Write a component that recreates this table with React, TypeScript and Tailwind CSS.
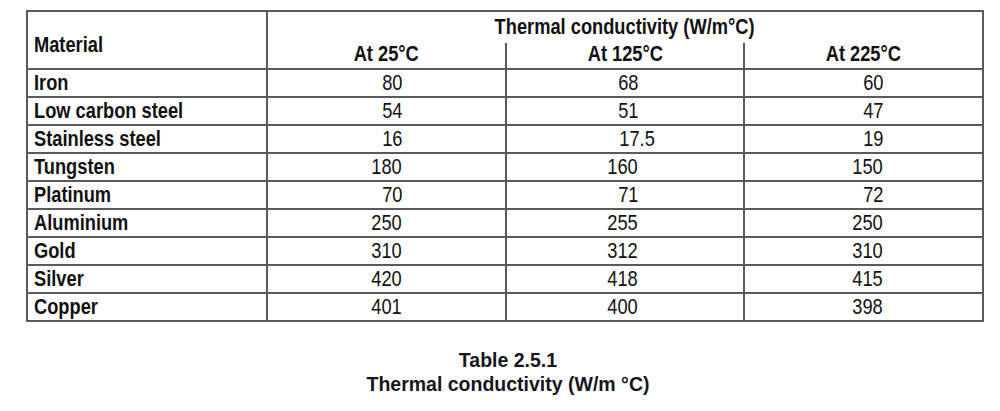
import React from 'react';

type Row = { name: string; a: string; b: string; c: string };

const rows: Row[] = [
  { name: 'Iron', a: '80', b: '68', c: '60' },
  { name: 'Low carbon steel', a: '54', b: '51', c: '47' },
  { name: 'Stainless steel', a: '16', b: '17.5', c: '19' },
  { name: 'Tungsten', a: '180', b: '160', c: '150' },
  { name: 'Platinum', a: '70', b: '71', c: '72' },
  { name: 'Aluminium', a: '250', b: '255', c: '250' },
  { name: 'Gold', a: '310', b: '312', c: '310' },
  { name: 'Silver', a: '420', b: '418', c: '415' },
  { name: 'Copper', a: '401', b: '400', c: '398' },
];

const cell = 'border-2 border-[#5a5a5a] p-0 leading-none whitespace-nowrap';

// condensed look: Arial-width face squeezed to "narrow" proportions
const Narrow = ({ children, origin }: { children: React.ReactNode; origin: string }) => (
  <span className={`inline-block scale-x-[0.83] ${origin}`}>{children}</span>
);

const App: React.FC = () => {
  return (
    <div className="w-[1000px] h-[411px] bg-white overflow-hidden">
      <div className="pl-[26px] pt-[10px]">
        <table
          className="w-[956px] table-fixed border-collapse text-[#111] text-[22px] font-bold"
          style={{ fontFamily: '"Liberation Sans", Arial, sans-serif' }}
        >
          <colgroup>
            <col className="w-[240px]" />
            <col className="w-[239px]" />
            <col className="w-[238px]" />
            <col className="w-[239px]" />
          </colgroup>
          <thead>
            <tr className="h-[32px]">
              <th rowSpan={2} className={`${cell} text-left pl-[6px] pt-[10px]`}>
                <Narrow origin="origin-left">Material</Narrow>
              </th>
              <th colSpan={3} className={`${cell} border-b-0 text-center align-middle pb-[1px]`}>
                <Narrow origin="origin-center">Thermal conductivity (W/m°C)</Narrow>
              </th>
            </tr>
            <tr className="h-[26px]">
              <th className={`${cell} border-t-0 text-center pb-[3px]`}>
                <Narrow origin="origin-center">At 25°C</Narrow>
              </th>
              <th className={`${cell} border-t-0 text-center pb-[3px]`}>
                <Narrow origin="origin-center">At 125°C</Narrow>
              </th>
              <th className={`${cell} border-t-0 text-center pb-[3px]`}>
                <Narrow origin="origin-center">At 225°C</Narrow>
              </th>
            </tr>
          </thead>
          <tbody className="font-normal">
            {rows.map((r) => (
              <tr key={r.name} className="h-[28px]">
                <td className={`${cell} font-bold pl-[6px] pb-[1px]`}>
                  <Narrow origin="origin-left">{r.name}</Narrow>
                </td>
                <td className={`${cell} text-right pr-[103px] pb-[1px]`}>
                  <Narrow origin="origin-right">{r.a}</Narrow>
                </td>
                <td className={`${cell} text-right pb-[1px] ${r.b === '17.5' ? 'pr-[88px]' : 'pr-[105px]'}`}>
                  <Narrow origin="origin-right">{r.b}</Narrow>
                </td>
                <td className={`${cell} text-right pr-[99px] pb-[1px]`}>
                  <Narrow origin="origin-right">{r.c}</Narrow>
                </td>
              </tr>
            ))}
          </tbody>
        </table>
        <div
          className="w-[956px] mt-[26px] pl-[8px] text-center text-[19.5px] leading-[24px] font-bold text-[#151520]"
          style={{ fontFamily: '"Liberation Sans", Arial, sans-serif' }}
        >
          <div>Table 2.5.1</div>
          <div>Thermal conductivity (W/m °C)</div>
        </div>
      </div>
    </div>
  );
};

export default App;
